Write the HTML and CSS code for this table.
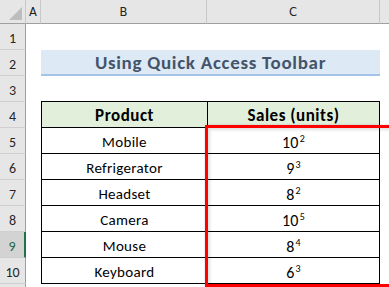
FILE: index.html
```html
<!DOCTYPE html>
<html>
<head>
<meta charset="utf-8">
<link rel="stylesheet" href="styles.css">
</head>
<body>
<div class="sheet">
  <div class="corner"><span class="tri"></span></div>
  <div class="colhead">A</div>
  <div class="colhead">B</div>
  <div class="colhead">C</div>
  <div class="colhead last"></div>

  <div class="rowhead">1</div><div class="cell"></div><div class="cell"></div><div class="cell"></div><div class="cell"></div>

  <div class="rowhead">2</div><div class="cell"></div><div class="title">Using Quick Access Toolbar</div><div class="cell"></div>

  <div class="rowhead">3</div><div class="cell"></div><div class="cell above"></div><div class="cell above"></div><div class="cell"></div>

  <div class="rowhead">4</div><div class="cell"></div><div class="cell th b">Product</div><div class="cell th c">Sales (units)</div><div class="cell"></div>

  <div class="rowhead">5</div><div class="cell"></div><div class="cell td b">Mobile</div><div class="cell td c num"><span>10<sup>2</sup></span></div><div class="cell"></div>
  <div class="rowhead">6</div><div class="cell"></div><div class="cell td b">Refrigerator</div><div class="cell td c num"><span>9<sup>3</sup></span></div><div class="cell"></div>
  <div class="rowhead">7</div><div class="cell"></div><div class="cell td b">Headset</div><div class="cell td c num"><span>8<sup>2</sup></span></div><div class="cell"></div>
  <div class="rowhead">8</div><div class="cell"></div><div class="cell td b">Camera</div><div class="cell td c num"><span>10<sup>5</sup></span></div><div class="cell"></div>
  <div class="rowhead sel">9</div><div class="cell"></div><div class="cell td b">Mouse</div><div class="cell td c num"><span>8<sup>4</sup></span></div><div class="cell"></div>
  <div class="rowhead">10</div><div class="cell"></div><div class="cell td b">Keyboard</div><div class="cell td c num"><span>6<sup>3</sup></span></div><div class="cell"></div>

  <div class="rowhead"></div><div class="cell"></div><div class="cell"></div><div class="cell"></div><div class="cell"></div>

  <div class="highlight"></div>
</div>
</body>
</html>
```

FILE: styles.css
```css
html, body {
  margin: 0;
  padding: 0;
  background: #ffffff;
}

.sheet {
  width: 389px;
  height: 287px;
  overflow: hidden;
  display: grid;
  grid-template-columns: 26px 15px 166px 173px 9px;
  grid-template-rows: 24px repeat(10, 26px) 3px;
  font-family: Carlito, Lato, "Liberation Sans", sans-serif;
  position: relative;
}

.corner,
.colhead {
  background: #e6e6e6;
  border-bottom: 1px solid #9f9f9f;
  border-right: 1px solid #c8c8c8;
  box-sizing: border-box;
}

.corner {
  position: relative;
}

.tri {
  position: absolute;
  right: 3px;
  bottom: 3px;
  width: 0;
  height: 0;
  border-left: 13px solid transparent;
  border-bottom: 13px solid #bdbdbd;
}

.colhead {
  display: flex;
  align-items: center;
  justify-content: center;
  font-family: "DejaVu Sans", "Liberation Sans", sans-serif;
  font-size: 11.5px;
  color: #222;
  padding-top: 1px;
}

.colhead.last {
  border-right: none;
}

.rowhead {
  background: #e6e6e6;
  border-right: 1px solid #9f9f9f;
  border-bottom: 1px solid #cfcfcf;
  box-sizing: border-box;
  display: flex;
  align-items: center;
  justify-content: center;
  font-size: 14px;
  color: #262626;
  padding-top: 4px;
}

.rowhead.sel {
  background: #d3d3d3;
  color: #1d6b45;
  border-right: 2px solid #217346;
}

.cell {
  box-sizing: border-box;
  background: #ffffff;
}

.title {
  grid-column: 3 / 5;
  background: #dde9f5;
  border-bottom: 2px solid #a3c4e6;
  box-sizing: border-box;
  display: flex;
  align-items: center;
  justify-content: center;
  font-weight: bold;
  font-size: 19px;
  letter-spacing: 0.7px;
  color: #44546a;
  padding-top: 1px;
}

.above {
  border-bottom: 1px solid #000;
}

.th,
.td {
  border-bottom: 1px solid #000;
  display: flex;
  align-items: center;
  justify-content: center;
  color: #000;
}

.b {
  border-left: 1px solid #000;
}

.c {
  border-left: 1px solid #000;
  border-right: 1px solid #000;
}

.th {
  background: #e2efda;
  font-weight: bold;
  font-size: 17px;
  letter-spacing: 0.5px;
  padding-top: 2px;
}

.td {
  font-size: 15px;
  letter-spacing: 0.3px;
  padding-top: 3px;
}

.td.num {
  font-size: 16px;
  letter-spacing: 0.2px;
  padding-top: 4px;
}

.td sup {
  font-size: 10px;
  line-height: 0;
  vertical-align: 6px;
  margin-left: 1px;
}

.highlight {
  grid-column: 4;
  grid-row: 6 / 12;
  position: absolute;
  left: -2px;
  right: -4px;
  top: -3px;
  bottom: -3px;
  border: 3px solid #ff0000;
  box-shadow: 1px 1px 3px rgba(0, 0, 0, 0.35), inset 2px 2px 3px rgba(0, 0, 0, 0.12);
  pointer-events: none;
}
```
